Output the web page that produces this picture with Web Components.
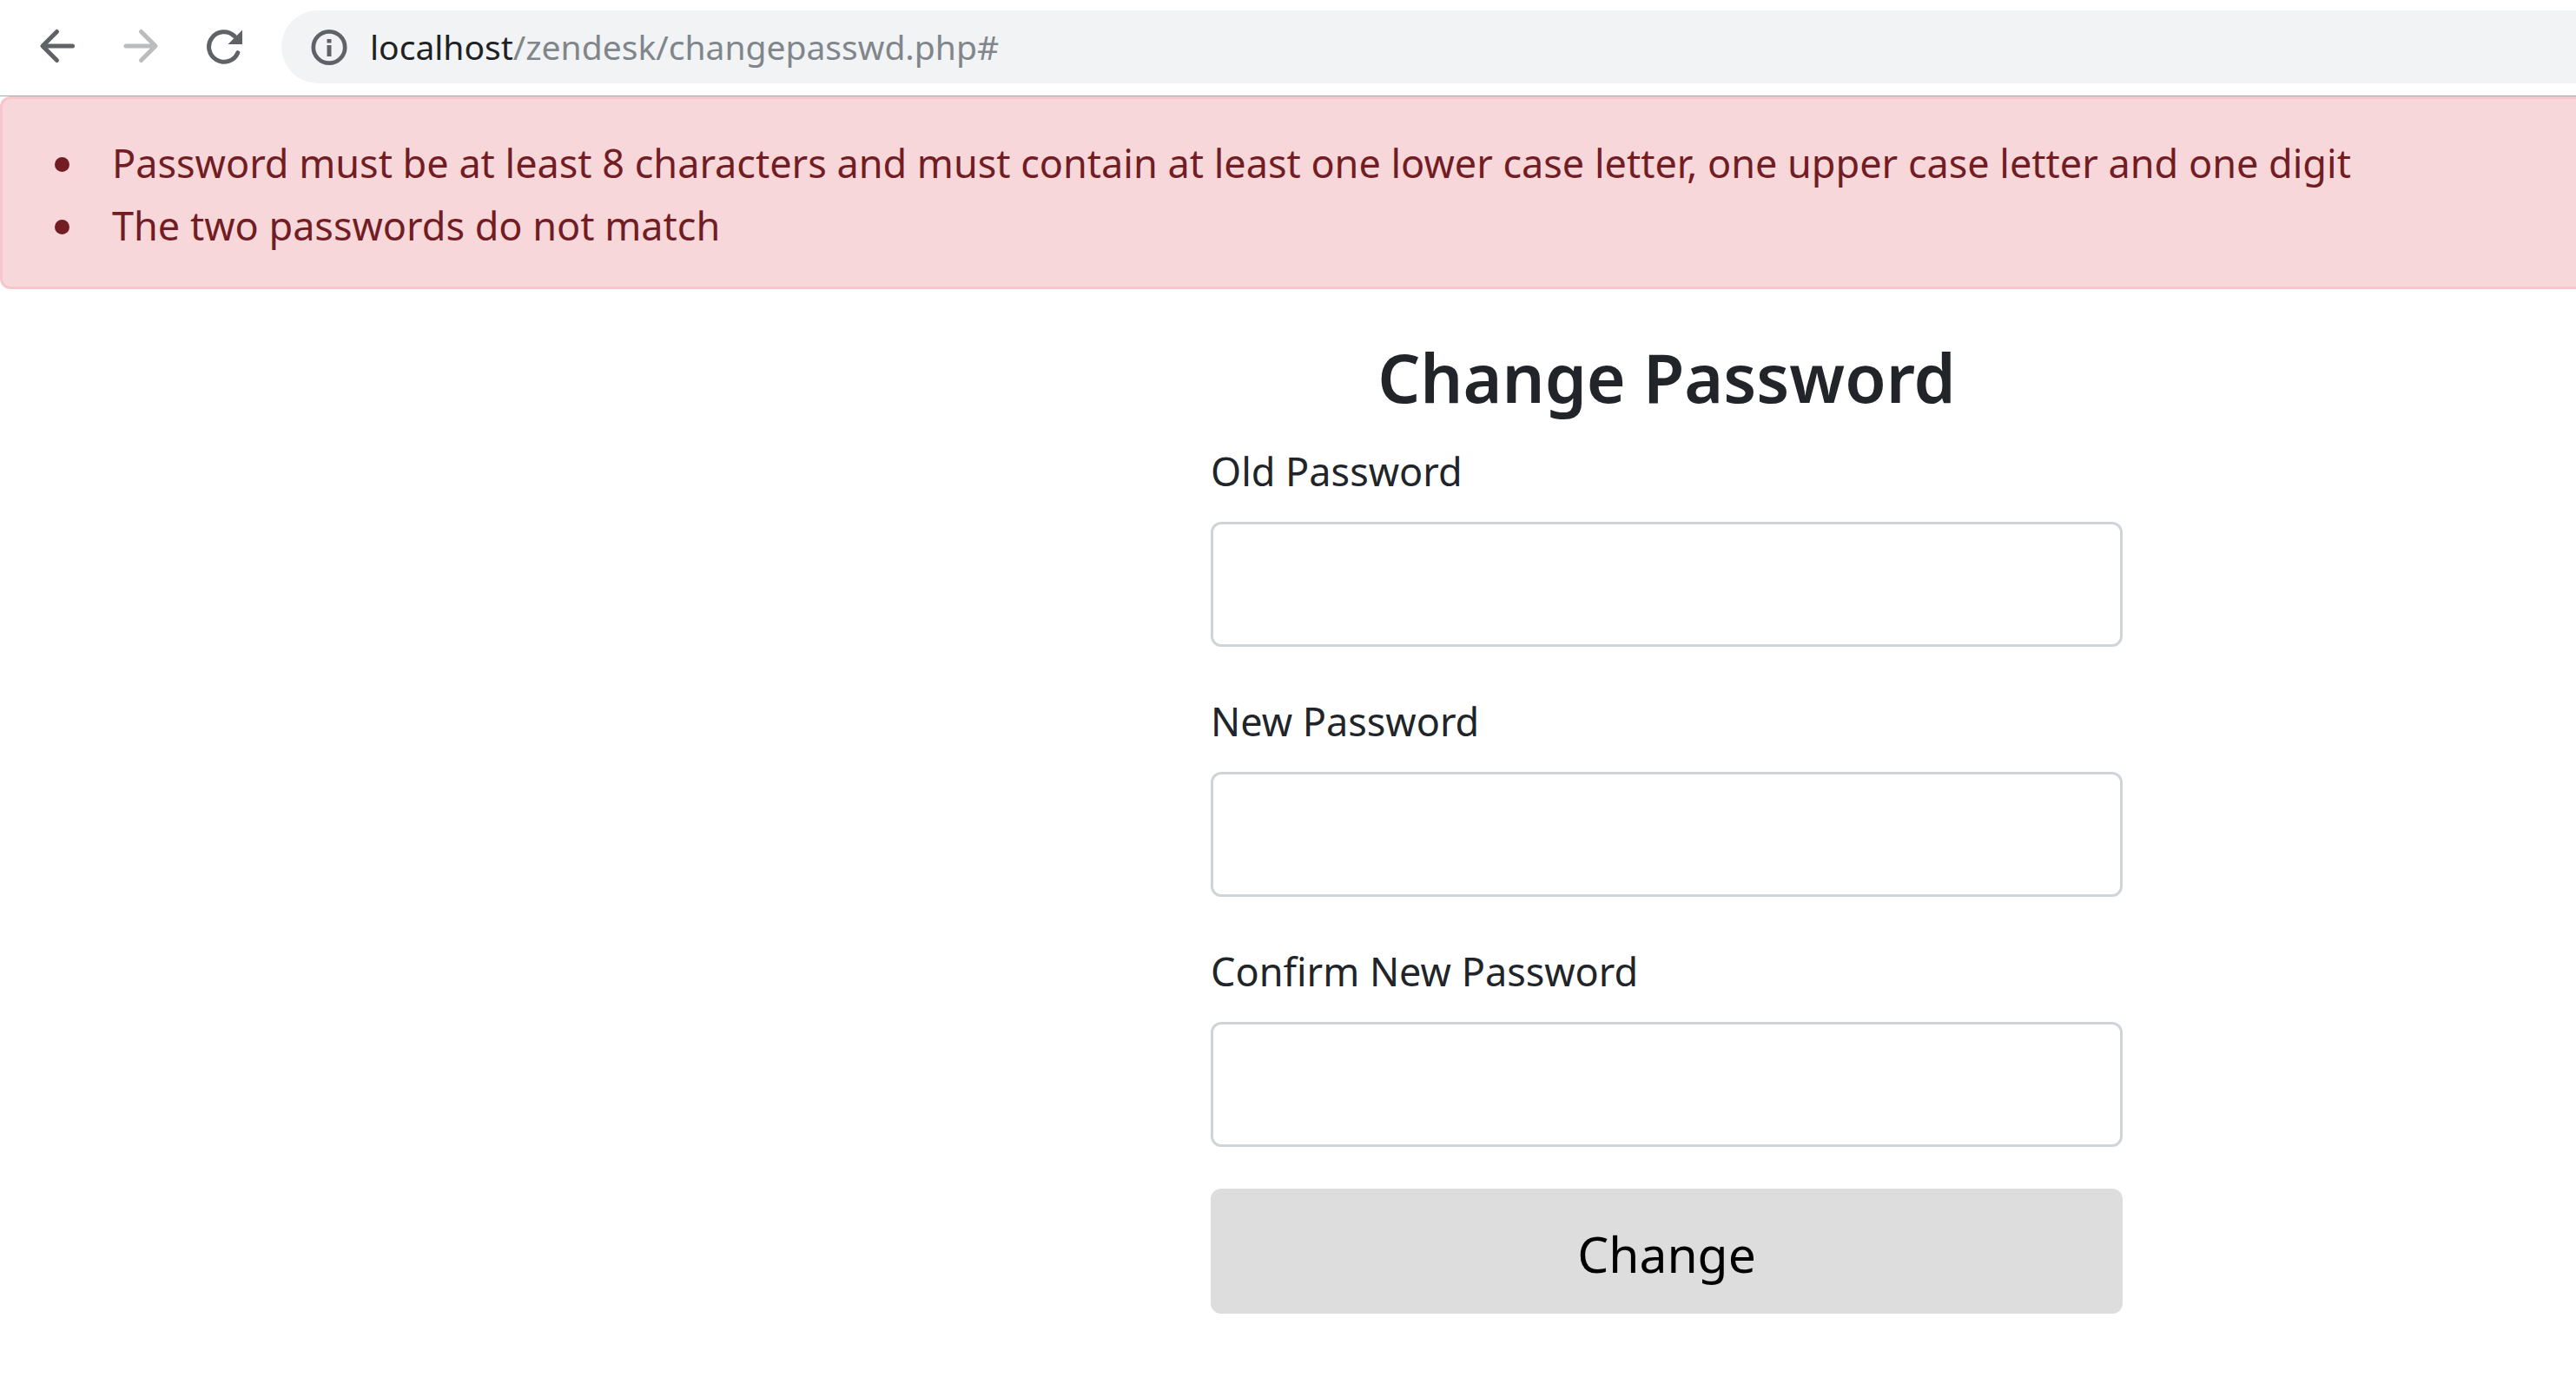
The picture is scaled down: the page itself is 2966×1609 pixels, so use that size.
<!DOCTYPE html>
<html lang="en">
<head>
<meta charset="utf-8">
<title>Change Password</title>
<style>
  body { margin: 0; background: #fff; color: #212529; font: 400 45px/72px "Noto Sans", "Open Sans", sans-serif; }
</style>
</head>
<body>
<browser-bar host="localhost" path="/zendesk/changepasswd.php#"></browser-bar>
<error-alert>
  <error-item>Password must be at least 8 characters and must contain at least one lower case letter, one upper case letter and one digit</error-item>
  <error-item>The two passwords do not match</error-item>
</error-alert>
<password-form heading="Change Password" action-label="Change">
  <password-field name="old" label="Old Password"></password-field>
  <password-field name="new" label="New Password"></password-field>
  <password-field name="confirm" label="Confirm New Password"></password-field>
</password-form>

<script>
class ShadowElement extends HTMLElement {
  constructor() {
    super();
    this.attachShadow({ mode: "open" });
  }
  connectedCallback() {
    this.shadowRoot.innerHTML = this.render();
  }
}

customElements.define("browser-bar", class extends ShadowElement {
  render() {
    return `
      <style>
        :host { display: flex; align-items: center; padding: 12px 0 14px 18px; border-bottom: 1px solid #a9abad; background: #fff; font-size: 39px; overflow: hidden; }
        nav { display: flex; margin-right: 18px; }
        button { display: flex; align-items: center; justify-content: center; width: 96px; height: 84px; padding: 0; border: 0; background: none; color: #5f6368; }
        button:disabled { color: #babcbe; }
        svg { flex: none; width: 48px; height: 48px; fill: none; stroke: currentColor; stroke-width: 5; }
        .address { display: flex; flex: 1; align-items: center; gap: 23px; height: 84px; padding-left: 31px; border-radius: 42px 0 0 42px; background: #f1f3f4; color: #5f6368; }
        .url { color: #80868b; white-space: nowrap; outline: 0; }
        .host { color: #202124; }
      </style>
      <nav>
        <button type="button" aria-label="Back"><svg viewBox="0 0 48 48" stroke-linecap="round" stroke-linejoin="round"><path d="M41.5 23H8M23.500 6.500L7 23l16.500 16.500"/><path d="M4.500 23L10 17.500V28.500Z" fill="currentColor" stroke="none"/></svg></button>
        <button type="button" aria-label="Forward" disabled><svg viewBox="0 0 48 48" stroke-linecap="round" stroke-linejoin="round"><path d="M7 23H40M24.500 6.500L41 23L24.500 39.500"/></svg></button>
        <button type="button" aria-label="Reload"><svg viewBox="0 0 48 48" stroke-linecap="round"><path d="M39.800 30.700A17.300 17.300 0 1 1 36 11.600"/><path d="M45 4.500V21H28.500Z" fill="currentColor" stroke="none"/></svg></button>
      </nav>
      <div class="address">
        <svg viewBox="0 0 48 48"><circle cx="24" cy="24.500" r="18.200" stroke-width="4.700"/><path d="M24 15v4.500M24 22v13"/></svg>
        <div class="url" role="textbox" aria-label="Address" contenteditable="true" spellcheck="false"><span class="host">${this.getAttribute("host")}</span>${this.getAttribute("path")}</div>
      </div>`;
  }
});

customElements.define("error-alert", class extends ShadowElement {
  render() {
    return `
      <style>
        :host { display: block; padding: 38px 0 34px 60px; border: 3px solid #f5c6cb; border-right: 0; border-radius: 12px 0 0 12px; background: #f8d7da; color: #721c24; }
      </style>
      <div role="list"><slot></slot></div>`;
  }
  connectedCallback() {
    super.connectedCallback();
    this.setAttribute("role", "alert");
  }
});

customElements.define("error-item", class extends ShadowElement {
  render() {
    return `
      <style>
        :host { display: flex; align-items: baseline; gap: 49px; }
        .dot { flex: none; display: flex; align-items: center; align-self: flex-start; height: 74px; }
        .dot::before { content: ""; width: 17px; height: 17px; border-radius: 50%; background: currentColor; }
        .row { display: contents; }
        :host { height: 72px; }
      </style>
      <span class="dot"></span><span><slot></slot></span>`;
  }
  connectedCallback() {
    super.connectedCallback();
    this.setAttribute("role", "listitem");
  }
});

customElements.define("password-form", class extends ShadowElement {
  render() {
    return `
      <style>
        :host { display: grid; grid-template-columns: 47fr minmax(auto, 1050px) 17.6fr; padding: 48px 0 96px; }
        form { grid-column: 2; display: flex; flex-direction: column; width: 1050px; max-width: 100%; }
        h2 { margin: 0 0 18px; font-size: 77px; font-weight: 600; line-height: 108px; text-align: center; }
        .fields { display: flex; flex-direction: column; gap: 50px; margin-bottom: 48px; }
        button { height: 144px; padding: 6px 0 0; border: 0; border-radius: 12px; background: #ddd; color: #000; font: inherit; font-size: 57px; }
      </style>
      <form>
        <h2>${this.getAttribute("heading")}</h2>
        <div class="fields"><slot></slot></div>
        <button type="button">${this.getAttribute("action-label")}</button>
      </form>`;
  }
});

customElements.define("password-field", class extends ShadowElement {
  render() {
    const name = this.getAttribute("name");
    return `
      <style>
        :host { display: flex; flex-direction: column; gap: 22px; }
        input { box-sizing: border-box; width: 100%; height: 144px; padding: 0 36px; border: 3px solid #ced4da; border-radius: 12px; background: #fff; font: inherit; color: inherit; }
      </style>
      <label for="${name}">${this.getAttribute("label")}</label>
      <input id="${name}" name="${name}" type="password">`;
  }
});
</script>
</body>
</html>
